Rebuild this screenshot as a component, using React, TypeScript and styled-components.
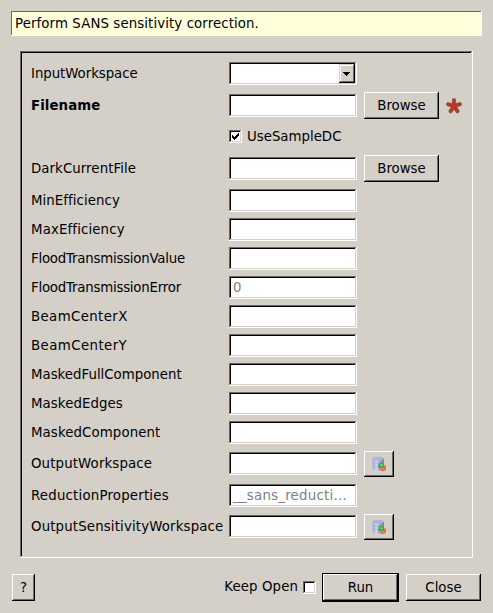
import React from "react";
import styled, { createGlobalStyle, css } from "styled-components";

const FACE = "#d4d0c8";
const SHADOW = "#6a6864";

const GlobalStyle = createGlobalStyle`
  * { box-sizing: border-box; }
  body {
    margin: 0;
    background: ${FACE};
    color: #000;
    font: 13.33px/16px "DejaVu Sans", sans-serif;
  }
`;

const sunken = css`
  box-shadow: inset -1px -1px #fff, inset 1px 1px ${SHADOW},
    inset -2px -2px ${FACE}, inset 2px 2px #000;
`;

const raised = css`
  box-shadow: inset -1px -1px #000, inset 1px 1px #fff, inset -2px -2px ${SHADOW};
`;

const Dialog = styled.main`
  width: 493px;
  height: 613px;
  padding: 11px 11px 0;
  display: flex;
  flex-direction: column;
`;

const Banner = styled.header`
  height: 25px;
  padding: 5px 4px 0;
  letter-spacing: 0.1px;
  background: #ffffdc;
  box-shadow: inset -1px -1px #fff, inset 1px 1px ${SHADOW};
`;

const Panel = styled.section`
  height: 507px;
  width: 453px;
  margin: 15px 0 0 9px;
  padding: 11px 11px 0;
  ${sunken}
`;

const Row = styled.div<{ $height: number; $gap: number; $top?: boolean }>`
  display: flex;
  align-items: ${(p) => (p.$top ? "flex-start" : "center")};
  height: ${(p) => p.$height}px;
  margin-top: ${(p) => p.$gap}px;
`;

const Label = styled.label<{ $bold?: boolean; $top?: boolean; $track?: number }>`
  width: 198px;
  flex: none;
  white-space: nowrap;
  padding-top: ${(p) => (p.$top ? 5 : 0)}px;
  font-weight: ${(p) => (p.$bold ? 700 : 400)};
  letter-spacing: ${(p) => (p.$track ? `${p.$track}px` : "normal")};
`;

const Field = styled.div<{ $top?: boolean }>`
  width: 128px;
  height: 23px;
  flex: none;
  display: flex;
  justify-content: flex-end;
  margin-top: ${(p) => (p.$top ? 1 : 0)}px;
  padding: 2px;
  background: #fff;
  ${sunken}
`;

const Placeholder = styled.span<{ $track?: number }>`
  flex: 1;
  padding: 2px 2px 0;
  color: #808080;
  white-space: nowrap;
  letter-spacing: ${(p) => p.$track ?? 0}px;
`;

const ComboArrow = styled.span`
  width: 16px;
  height: 19px;
  display: grid;
  place-items: center;
  background: ${FACE};
  box-shadow: inset -1px -1px #000, inset 1px 1px ${FACE},
    inset -2px -2px ${SHADOW}, inset 2px 2px #fff;
`;

const Button = styled.button<{ $width: number; $height?: number }>`
  width: ${(p) => p.$width}px;
  height: ${(p) => p.$height ?? 27}px;
  flex: none;
  display: flex;
  align-items: center;
  justify-content: center;
  padding: 0;
  border: 0;
  color: inherit;
  font: inherit;
  background: ${FACE};
  ${raised}
`;

const FieldButton = styled(Button)`
  margin-left: 7px;
`;

const DefaultFrame = styled.div`
  margin: 0 7px 0 6px;
  padding: 1px;
  background: #000;
`;

const Required = styled.span`
  margin-left: 7px;
  display: flex;
`;

const Check = styled.span`
  width: 13px;
  height: 13px;
  flex: none;
  display: grid;
  place-items: center;
  background: #fff;
  ${sunken}
`;

const CheckText = styled.span`
  margin-left: 5px;
`;

const Footer = styled.footer`
  height: 29px;
  margin-top: 15px;
  padding: 0 1px;
  display: flex;
  align-items: center;
`;

const KeepOpen = styled.span`
  margin: -2px 5px 0 auto;
  letter-spacing: 0.1px;
`;

const Star = () => (
  <svg width="16" height="16" viewBox="0 0 16 16">
    <g strokeLinecap="round">
      <path d="M8 8V2.2M8 8L2.2 6.2M8 8L13.8 6.2M8 8L4.6 13.2M8 8L11.4 13.2" stroke="#7d6a62" strokeWidth="4.2" />
      <path d="M8 8V2.2M8 8L2.2 6.2M8 8L13.8 6.2M8 8L4.6 13.2M8 8L11.4 13.2" stroke="#bf3524" strokeWidth="3" />
    </g>
  </svg>
);

const Database = () => (
  <svg width="16" height="16" viewBox="0 0 16 16">
    <defs>
      <linearGradient id="drum">
        <stop offset="0" stopColor="#a5a7dc" />
        <stop offset=".35" stopColor="#cfd0f4" />
        <stop offset="1" stopColor="#7275aa" />
      </linearGradient>
    </defs>
    <path d="M1.5 2.6v10.2c0 2.6 11.5 2.6 11.5 0V2.6z" fill="url(#drum)" />
    <ellipse cx="7.25" cy="2.7" rx="5.75" ry="1.9" fill="#b0b2dc" />
    <path d="M2 6.2c2 1.6 9 1.6 11 0M2 9.5c2 1.6 9 1.6 11 0" stroke="#9fa1d2" strokeWidth=".6" fill="none" />
    <path d="M7.5 12.5V8.6l1.6-1.8h3l1.2 2v2h-2.6l-1.5 1.7z" fill="#32ad35" />
    <path d="M9.2 8.2h2.4v1.8H9.2z" fill="#77dc65" />
    <path d="M15 9v4.2L13.4 15h-3l-.8-1.2 1.2-1.8 1.6-.4 1-1.6z" fill="#f26338" />
    <path d="M11.6 12.4h2v1.4h-2z" fill="#ff9b58" />
  </svg>
);

type Item = {
  name: string;
  kind?: "combo" | "file" | "workspace";
  required?: boolean;
  hint?: string;
  hintTrack?: number;
  gap?: number;
  track?: number;
};

const inputs: Item[] = [
  { name: "InputWorkspace", kind: "combo", gap: 0, track: -0.05 },
  { name: "Filename", kind: "file", required: true, gap: 7, track: 0.08 },
];

const parameters: Item[] = [
  { name: "DarkCurrentFile", kind: "file", gap: 7, track: 0.07 },
  { name: "MinEfficiency", gap: 7 , track: 0.06 },
  { name: "MaxEfficiency", track: 0.13 },
  { name: "FloodTransmissionValue", track: -0.22 },
  { name: "FloodTransmissionError", hint: "0", track: -0.22 },
  { name: "BeamCenterX", track: 0.38 },
  { name: "BeamCenterY", track: 0.42 },
  { name: "MaskedFullComponent" },
  { name: "MaskedEdges", track: 0.08 },
  { name: "MaskedComponent", track: 0.1 },
  { name: "OutputWorkspace", kind: "workspace", gap: 7, track: 0.13 },
  { name: "ReductionProperties", hint: "__sans_reducti…", hintTrack: 0.24, gap: 7, track: 0.2 },
  { name: "OutputSensitivityWorkspace", kind: "workspace", gap: 7, track: 0.15 },
];

const Property = ({ name, kind, required, hint, hintTrack, track, gap = 6 }: Item) => {
  const top = kind === "workspace";
  return (
    <Row $height={kind === "file" ? 27 : top ? 26 : 23} $gap={gap} $top={top}>
      <Label $bold={required} $top={top} $track={track}>{name}</Label>
      <Field $top={top}>
        {hint && <Placeholder $track={hintTrack}>{hint}</Placeholder>}
        {kind === "combo" && (
          <ComboArrow>
            <svg width="8" height="4" viewBox="0 0 8 4" shapeRendering="crispEdges">
              <path d="M0 0h7v1H6v1H5v1H4v1H3V3H2V2H1V1H0z" />
            </svg>
          </ComboArrow>
        )}
      </Field>
      {kind === "file" && <FieldButton $width={75}>Browse</FieldButton>}
      {top && <FieldButton $width={30} $height={26}><Database /></FieldButton>}
      {required && <Required><Star /></Required>}
    </Row>
  );
};

export default function App() {
  return (
    <>
      <GlobalStyle />
      <Dialog>
        <Banner>Perform SANS sensitivity correction.</Banner>
        <Panel>
          {inputs.map((p) => <Property key={p.name} {...p} />)}
          <Row $height={23} $gap={6}>
            <Label />
            <Check>
              <svg width="7" height="7" viewBox="0 0 7 7" shapeRendering="crispEdges">
                <path d="M0 2h1v1h1v1h1V3h1V2h1V1h1V0h1v3H6v1H5v1H4v1H3v1H2V6H1V5H0z" />
              </svg>
            </Check>
            <CheckText>UseSampleDC</CheckText>
          </Row>
          {parameters.map((p) => <Property key={p.name} {...p} />)}
        </Panel>
        <Footer>
          <Button $width={23}>?</Button>
          <KeepOpen>Keep Open</KeepOpen>
          <Check />
          <DefaultFrame><Button $width={75}>Run</Button></DefaultFrame>
          <Button $width={75}>Close</Button>
        </Footer>
      </Dialog>
    </>
  );
}
